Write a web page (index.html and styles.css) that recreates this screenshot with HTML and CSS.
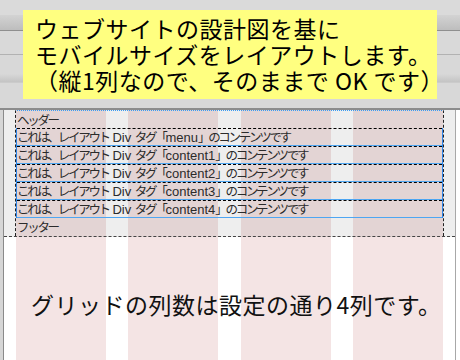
FILE: index.html
```html
<!DOCTYPE html>
<html lang="ja">
    <head>
        <meta charset="UTF-8">
        <title>モバイルレイアウト</title>
        <link rel="stylesheet" href="styles.css">
    </head>
    <body>
        <div id="toolbar">
            <div class="band band1"></div>
            <div class="band band2"></div>
            <div class="band band3"></div>
            <div class="band band4"></div>
            <div class="band band5"></div>
            <div id="note">
                ウェブサイトの設計図を基に<br>
                モバイルサイズをレイアウトします。<br>
                （縦1列なので、そのままで OK です）
            </div>
        </div>
        <div id="design">
            <div class="edge-left"></div>
            <div id="canvas">
                <div id="page">
                    <div id="container">
                        <div class="slot">ヘッダー</div>
                        <div id="rows">
                            <div class="row">これは、レイアウト<span class="en"> Div </span>タグ「<span class="en">menu</span>」のコンテンツです</div>
                            <div class="row">これは、レイアウト<span class="en"> Div </span>タグ「<span class="en">content1</span>」のコンテンツです</div>
                            <div class="row">これは、レイアウト<span class="en"> Div </span>タグ「<span class="en">content2</span>」のコンテンツです</div>
                            <div class="row">これは、レイアウト<span class="en"> Div </span>タグ「<span class="en">content3</span>」のコンテンツです</div>
                            <div class="row">これは、レイアウト<span class="en"> Div </span>タグ「<span class="en">content4</span>」のコンテンツです</div>
                        </div>
                        <div class="slot">フッター</div>
                    </div>
                </div>
                <p id="caption">グリッドの列数は設定の通り4列です。</p>
            </div>
            <div class="edge-right"></div>
        </div>
    </body>
</html>
```

FILE: styles.css
```css
body {
    margin: 0;
    width: 460px;
    height: 360px;
    overflow: hidden;
    font-family: "Noto Sans CJK JP", "DejaVu Sans", sans-serif;
    background: #ffffff;
}
#toolbar {
    position: relative;
    height: 110px;
}
.band {
    box-sizing: border-box;
}
.band1 {
    height: 15px;
    background: #dadada;
}
.band2 {
    height: 16px;
    background: linear-gradient(#d3d3d3, #bdbdbd);
    border-bottom: 1px solid #8f8f8f;
}
.band3 {
    height: 24px;
    background: #d9d9d9;
    border-bottom: 1px solid #b2b2b2;
}
.band4 {
    height: 28px;
    background: linear-gradient(#d8d8d8 70%, #c4c4c4);
    border-bottom: 1px solid #cbcbcb;
}
.band5 {
    height: 27px;
    background: #d8d8d8;
    border-bottom: 2px solid #8c8c8c;
}
#note {
    position: absolute;
    left: 23px;
    top: 10px;
    width: 414px;
    height: 89px;
    box-sizing: border-box;
    padding: 5px 8px 5px 12px;
    background: #ffff80;
    color: #000;
    font-size: 23px;
    line-height: 26px;
    letter-spacing: 0.5px;
    white-space: nowrap;
}
#design {
    display: flex;
    height: 250px;
    background: linear-gradient(90deg,
        transparent 16px, #f4e4e4 16px 106px,
        transparent 106px 128px, #f4e4e4 128px 218px,
        transparent 218px 241px, #f4e4e4 241px 331px,
        transparent 331px 353px, #f4e4e4 353px 443px,
        transparent 443px);
}
.edge-left {
    width: 3px;
    background: #d6d6d6;
    border-right: 1px solid #8a8a8a;
}
.edge-right {
    width: 4px;
    border-left: 1px solid #a8a8a8;
    background: #ffffff;
}
#canvas {
    flex: 1;
}
#page {
    height: 127px;
    box-sizing: border-box;
    padding-left: 11px;
    background: rgba(0, 0, 0, 0.065);
    border-bottom: 1px dashed #444;
}
#container {
    width: 429px;
    height: 126px;
    box-sizing: border-box;
    border-top: 1px dotted #3b9cf2;
    border-left: 1px dashed #222;
    border-right: 1px dashed #222;
    font-size: 12.5px;
    letter-spacing: -2.3px;
    color: #2b2b2b;
}
.en {
    font-family: "Liberation Sans", Arial, sans-serif;
    font-size: 13px;
    letter-spacing: 0;
}
.slot {
    height: 17px;
    line-height: 17px;
    padding-left: 1px;
}
#rows {
    border-left: 1px solid #2f86e8;
    border-right: 1px solid #2f86e8;
}
.row {
    height: 16px;
    line-height: 16px;
    border-top: 1px dashed #000;
    border-bottom: 1px solid #4ea6f2;
    white-space: nowrap;
}
#caption {
    margin: 0;
    padding: 52px 0 0 27px;
    font-size: 23px;
    line-height: 30px;
    letter-spacing: 0.5px;
    color: #111;
    white-space: nowrap;
}
```
